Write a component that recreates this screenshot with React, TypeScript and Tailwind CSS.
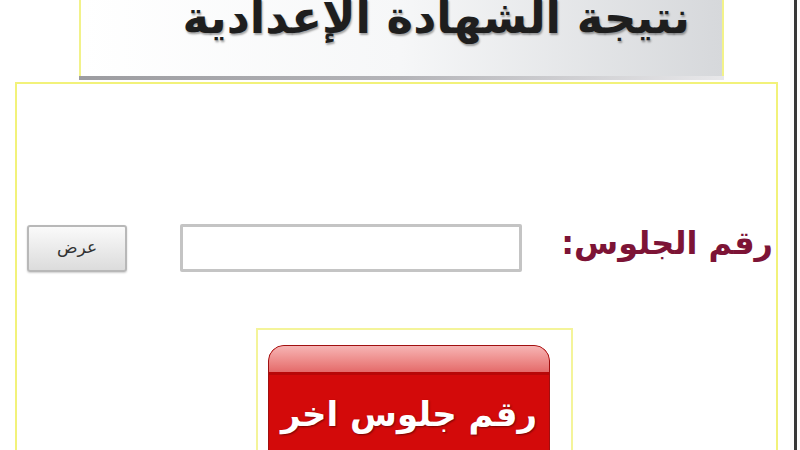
import React from "react";

export default function App() {
  const ar = { fontFamily: '"DejaVu Sans", "Noto Sans", sans-serif' };
  return (
    <div className="relative w-[800px] h-[450px] overflow-hidden bg-white flex flex-col" style={ar}>
      {/* right dark edge */}
      <div className="absolute right-[3px] top-0 h-full w-[3px] bg-[#3a3a3a]" />

      {/* header */}
      <div className="shrink-0 ml-[79px] w-[645px] h-[100px] -mt-[20px] flex flex-col">
        <div className="flex-1 border-l-2 border-r-2 border-[#f2f28a] bg-gradient-to-r from-[#ffffff] via-[#f6f7f8] to-[#d6d8db] flex justify-end items-start pr-[32px]">
          <span
            dir="rtl"
            className="mt-[15px] text-[45px] font-bold leading-none text-[#1e1e1e] whitespace-nowrap [text-shadow:1px_2px_2px_rgba(0,0,0,0.35)]"
          >
            نتيجة الشهادة الإعدادية
          </span>
        </div>
        <div className="h-[4px] bg-gradient-to-r from-[#9c9ca0] via-[#b4b4b8] to-[#e8e8ea]" />
      </div>

      {/* main panel */}
      <div className="mt-[2px] ml-[15px] mr-[22px] flex-1 min-h-0 border-2 border-[#f2f27a] border-b-0 flex flex-col">
        <div className="shrink-0 mt-[140px] flex items-center">
          <button className="ml-[10px] w-[100px] h-[47px] rounded-[3px] border-2 border-[#b8b8b8] bg-gradient-to-b from-[#fafafa] to-[#dcdcdc] text-[17px] text-[#333] shadow-[0_1px_2px_rgba(0,0,0,0.2)]">
            عرض
          </button>
          <div className="ml-[53px] w-[342px] h-[48px] border-[3px] border-[#c4c4c4] rounded-[2px] bg-white" />
          <span
            dir="rtl"
            className="ml-auto mr-[3px] -mt-[10px] text-[32px] font-bold text-[#7d1436] whitespace-nowrap"
          >
            رقم الجلوس:
          </span>
        </div>

        <div className="shrink-0 mt-[56px] ml-[239px] w-[317px] h-[200px] border-2 border-[#f4f49a] border-b-0 pl-[10px] pt-[15px]">
          <div className="w-[282px] h-[140px] rounded-t-[16px] overflow-hidden border border-[#a01010] flex flex-col bg-[#d30a0a]">
            <div className="h-[26px] bg-gradient-to-b from-[#f6b4b4] to-[#e46a6a] rounded-t-[14px]" />
            <div className="h-[3px] bg-[#b80808]" />
            <div className="flex justify-center pt-[14px]">
              <span
                dir="rtl"
                className="text-[34px] font-bold text-white whitespace-nowrap [text-shadow:1px_1px_2px_rgba(0,0,0,0.45)]"
              >
                رقم جلوس اخر
              </span>
            </div>
          </div>
        </div>
      </div>
    </div>
  );
}
